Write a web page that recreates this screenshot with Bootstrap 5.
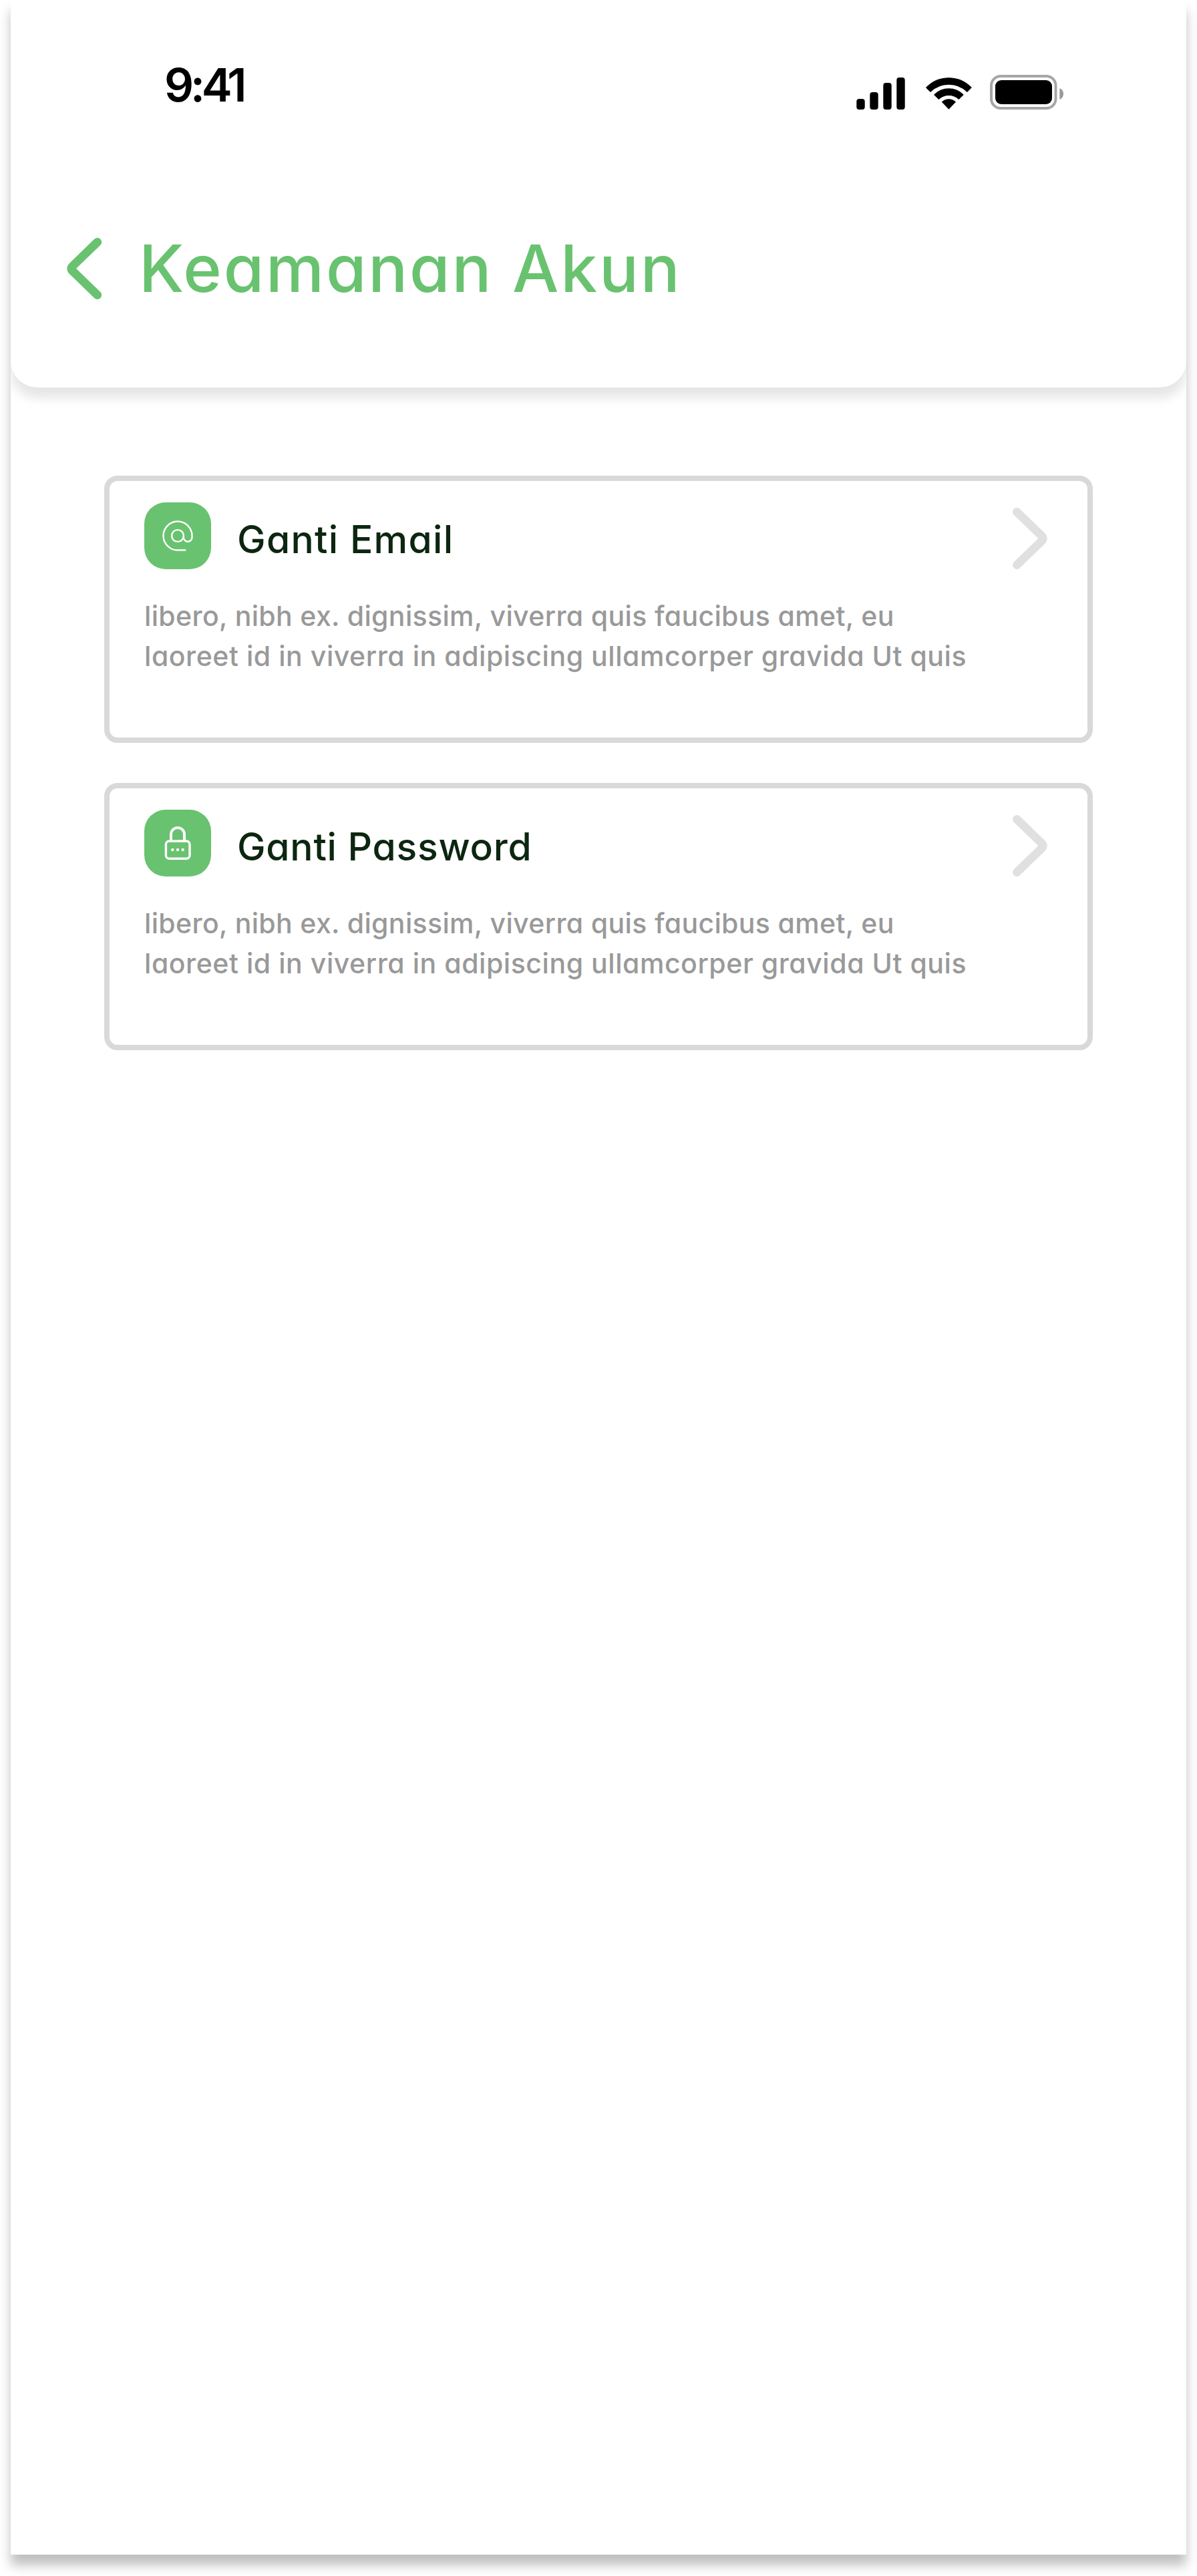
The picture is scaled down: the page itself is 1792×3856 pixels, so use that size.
<!DOCTYPE html>
<html lang="id">
<head>
<meta charset="utf-8">
<meta name="viewport" content="width=device-width, initial-scale=1">
<title>Keamanan Akun</title>
<link href="https://cdn.jsdelivr.net/npm/bootstrap@5.3.0/dist/css/bootstrap.min.css" rel="stylesheet">
<style>
  /* cv11: Inter's single-storey "a" */
  body { font-family: Inter, "Open Sans", sans-serif; font-feature-settings: "cv11"; background: #fff; min-height: 3856px; }
  .screen { width: 1760px; height: 3824px; background: #fff; box-shadow: 0 16px 16px rgba(0,0,0,.25); }
  .app-header { height: 580px; border-radius: 0 0 40px 40px; background: #fff; box-shadow: 0 16px 16px rgba(0,0,0,.1); }
  .status-bar { padding: 86px 184px 0 230px; height: 190px; }
  .clock { font-size: 69px; line-height: 82px; font-weight: 600; letter-spacing: -5.2px; color: #000; }
  .status-icons { margin-top: 26px; }
  .title-row { padding: 146px 0 0 84px; }
  .page-title { font-size: 98px; line-height: 132px; font-weight: 500; letter-spacing: 2.8px; color: #69c26f; }
  .back { color: #69c26f; margin-right: 55px; line-height: 0; }
  .options { padding: 132px 140px 0; gap: 60px; }
  .option { height: 400px; border: 8px solid #d9d9d9; border-radius: 20px; padding: 32px 60px 0 52px; background: #fff; }
  .tile { width: 100px; height: 100px; border-radius: 32px; background: #69c26f; }
  .option-title { font-size: 57px; line-height: 80px; font-weight: 500; color: #0c2610; margin: 16px 0 0 39px; }
  .track-wide { letter-spacing: 1.3px; }
  .track-mid { letter-spacing: .75px; }
  .option-text { font-size: 41px; line-height: 60px; font-weight: 500; color: #999; margin: 40px 0 0; white-space: nowrap; }
  .line-a { letter-spacing: .35px; }
  .line-b { letter-spacing: .55px; }
  .chevron { margin-top: 8px; color: #e0e0e0; }
</style>
</head>
<body>
<main class="screen mx-auto">
  <div class="h-100 overflow-hidden">
    <header class="app-header">
      <div class="status-bar d-flex justify-content-between align-items-start">
        <div class="clock">9:41</div>
        <svg class="status-icons" width="310" height="52" viewBox="1282 112 310 52" aria-hidden="true">
          <!-- signal -->
          <rect x="1282.3" y="148" width="12.4" height="16" rx="4"/>
          <rect x="1302.3" y="138" width="12.4" height="26" rx="4"/>
          <rect x="1322.3" y="124" width="12.4" height="40" rx="4"/>
          <rect x="1342.3" y="116" width="12.4" height="48" rx="4"/>
          <!-- wifi -->
          <g stroke="#000" stroke-width="1.2" stroke-linejoin="round">
            <path d="M1386.8 131A46.7 46.7 0 0 1 1454 131L1448 137.2A39.8 39.8 0 0 0 1392.8 137.2Z"/>
            <path d="M1398.9 141.8A30.5 30.5 0 0 1 1441.9 141.8L1435.5 148.2A22.3 22.3 0 0 0 1405.3 148.2Z"/>
            <path d="M1410.6 152.6A14.5 14.5 0 0 1 1430.2 152.6L1420.4 162.8Z"/>
          </g>
          <!-- battery -->
          <rect x="1484" y="114" width="96.5" height="48" rx="14" fill="none" stroke="#a6a6a6" stroke-width="4"/>
          <rect x="1490" y="120" width="85" height="36" rx="9"/>
          <path d="M1586.3 132V149A9.2 9.2 0 0 0 1586.3 132Z" fill="#999"/>
        </svg>
      </div>
      <div class="title-row d-flex align-items-center">
        <a class="back" href="#" aria-label="Kembali">
          <svg width="53" height="92" viewBox="0 0 53 92" fill="none" stroke="currentColor" stroke-width="12.8" stroke-linecap="round" stroke-linejoin="round"><path d="M45.8 6.4L8.5 42.5Q5 46 8.5 49.5L45.8 85.6"/></svg>
        </a>
        <h1 class="page-title mb-0">Keamanan Akun</h1>
      </div>
    </header>

    <section class="options d-flex flex-column">
      <article class="option">
        <div class="d-flex align-items-start">
          <div class="tile flex-shrink-0">
            <svg class="d-block" width="100" height="100" viewBox="0 0 100 100" fill="none" stroke="#fff" stroke-width="2.4" stroke-linecap="round" aria-hidden="true">
              <path d="M61.3 71.5H50A21.5 21.5 0 1 1 71.5 50V52.5A6.3 6.3 0 0 1 58.9 52.5V50"/>
              <circle cx="50" cy="50" r="8.9"/>
            </svg>
          </div>
          <h2 class="option-title track-wide">Ganti Email</h2>
          <svg class="chevron ms-auto" width="52" height="92" viewBox="0 0 52 92" fill="none" stroke="currentColor" stroke-width="12.6" stroke-linecap="round" stroke-linejoin="round" aria-hidden="true"><path d="M6.3 6.3L43.8 42.5Q47 46 43.8 49.5L6.3 85.7"/></svg>
        </div>
        <p class="option-text"><span class="line-a">libero, nibh ex. dignissim, viverra quis faucibus amet, eu</span><br><span class="line-b">laoreet id in viverra in adipiscing ullamcorper gravida Ut quis</span></p>
      </article>

      <article class="option">
        <div class="d-flex align-items-start">
          <div class="tile flex-shrink-0">
            <svg class="d-block" width="100" height="100" viewBox="0 0 100 100" fill="none" stroke="#fff" aria-hidden="true">
              <path d="M40 47V37A10 10 0 0 1 60 37V47" stroke-width="4"/>
              <rect x="32.4" y="47" width="35.6" height="26.2" rx="5" stroke-width="3.4"/>
              <g fill="#fff" stroke="none"><circle cx="42.3" cy="60" r="2.2"/><circle cx="50" cy="60" r="2.2"/><circle cx="57.7" cy="60" r="2.2"/></g>
            </svg>
          </div>
          <h2 class="option-title track-mid">Ganti Password</h2>
          <svg class="chevron ms-auto" width="52" height="92" viewBox="0 0 52 92" fill="none" stroke="currentColor" stroke-width="12.6" stroke-linecap="round" stroke-linejoin="round" aria-hidden="true"><path d="M6.3 6.3L43.8 42.5Q47 46 43.8 49.5L6.3 85.7"/></svg>
        </div>
        <p class="option-text"><span class="line-a">libero, nibh ex. dignissim, viverra quis faucibus amet, eu</span><br><span class="line-b">laoreet id in viverra in adipiscing ullamcorper gravida Ut quis</span></p>
      </article>
    </section>
  </div>
</main>
<script src="https://cdn.jsdelivr.net/npm/bootstrap@5.3.0/dist/js/bootstrap.bundle.min.js"></script>
</body>
</html>
